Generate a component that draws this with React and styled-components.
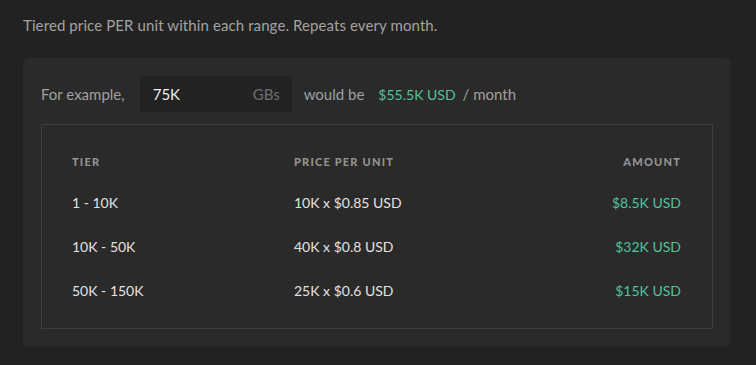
import React from "react";
import styled, { createGlobalStyle } from "styled-components";

const Global = createGlobalStyle`
  html, body { margin: 0; padding: 0; background: #222222; }
  body { font-family: Lato, "Liberation Sans", sans-serif; -webkit-font-smoothing: antialiased; }
`;

const Page = styled.div`
  padding: 14px 25px 17px 23px;
  background: #222222;
`;

const Description = styled.p`
  margin: 0 0 22px;
  font-size: 15px;
  line-height: 22px;
  color: #a3a3a3;
  letter-spacing: 0.1px;
`;

const Card = styled.section`
  background: #2a2a2a;
  border-radius: 6px;
  padding: 18px;
`;

const ExampleRow = styled.div`
  display: flex;
  align-items: center;
  height: 36px;
  font-size: 15px;
  color: #a0a0a0;
`;

const Label = styled.span`
  margin-right: ${(p) => p.$gap || 0}px;
  font-size: ${(p) => (p.$accent ? 14 : 15)}px;
  color: ${(p) => (p.$accent ? "#4fc49d" : "#a0a0a0")};
  white-space: nowrap;
`;

const InputBox = styled.div`
  display: flex;
  align-items: center;
  justify-content: space-between;
  width: 152px;
  height: 36px;
  box-sizing: border-box;
  padding: 0 12px 0 13px;
  margin: 0 12px 0 15px;
  background: #222222;
`;

const InputValue = styled.span`
  color: #eeeeee;
`;

const Unit = styled.span`
  color: #6f6f6f;
`;

const Table = styled.div`
  margin-top: 12px;
  border: 1px solid #3e3e3e;
  padding: 18px 31px 16px 30px;
`;

const Row = styled.div`
  display: grid;
  grid-template-columns: 222px 1fr auto;
  align-items: center;
  height: ${(p) => (p.$head ? 37 : 44)}px;
`;

const HeadCell = styled.div`
  font-size: 11px;
  font-weight: 900;
  letter-spacing: 1.2px;
  color: #939393;
  text-align: ${(p) => (p.$right ? "right" : "left")};
`;

const Cell = styled.div`
  font-size: 14px;
  color: ${(p) => (p.$accent ? "#4fc49d" : "#e2e2e2")};
  text-align: ${(p) => (p.$right ? "right" : "left")};
`;

const tiers = [
  { tier: "1 - 10K", price: "10K x $0.85 USD", amount: "$8.5K USD" },
  { tier: "10K - 50K", price: "40K x $0.8 USD", amount: "$32K USD" },
  { tier: "50K - 150K", price: "25K x $0.6 USD", amount: "$15K USD" },
];

export default function App() {
  return (
    <Page>
      <Global />
      <Description>Tiered price PER unit within each range. Repeats every month.</Description>
      <Card>
        <ExampleRow>
          <Label>For example,</Label>
          <InputBox>
            <InputValue>75K</InputValue>
            <Unit>GBs</Unit>
          </InputBox>
          <Label $gap={14}>would be</Label>
          <Label $accent $gap={7}>$55.5K USD</Label>
          <Label>/ month</Label>
        </ExampleRow>
        <Table>
          <Row $head>
            <HeadCell>TIER</HeadCell>
            <HeadCell>PRICE PER UNIT</HeadCell>
            <HeadCell $right>AMOUNT</HeadCell>
          </Row>
          {tiers.map((t) => (
            <Row key={t.tier}>
              <Cell>{t.tier}</Cell>
              <Cell>{t.price}</Cell>
              <Cell $accent $right>{t.amount}</Cell>
            </Row>
          ))}
        </Table>
      </Card>
    </Page>
  );
}
